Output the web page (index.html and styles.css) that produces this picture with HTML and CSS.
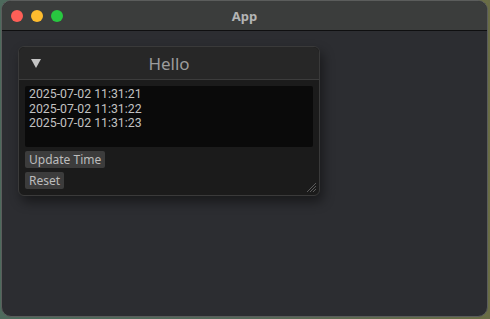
FILE: index.html
```html
<!DOCTYPE html>
<html lang="en">
<head>
    <meta charset="UTF-8">
    <meta name="viewport" content="width=device-width, initial-scale=1.0">
    <title>App</title>
    <link rel="stylesheet" href="styles.css">
</head>
<body>
    <div class="desktop">
        <div class="window">
            <header class="titlebar">
                <div class="lights">
                    <span class="light red"></span>
                    <span class="light yellow"></span>
                    <span class="light green"></span>
                </div>
                <h1>App</h1>
            </header>
            <main class="content">
                <section class="panel">
                    <div class="panel-head">
                        <svg class="collapse" width="10" height="9" viewBox="0 0 10 9">
                            <polygon points="0,0 10,0 5,9" fill="#c4c4c4"/>
                        </svg>
                        <h2>Hello</h2>
                    </div>
                    <div class="panel-body">
                        <div class="log">
                            <div>2025-07-02 11:31:21</div>
                            <div>2025-07-02 11:31:22</div>
                            <div>2025-07-02 11:31:23</div>
                        </div>
                        <button class="btn">Update Time</button>
                        <button class="btn">Reset</button>
                    </div>
                    <!-- resize grip -->
                    <svg class="grip" width="10" height="10" viewBox="0 0 10 10">
                        <line x1="1" y1="10" x2="10" y2="1" stroke="#5a5a5a" stroke-width="1"/>
                        <line x1="4" y1="10" x2="10" y2="4" stroke="#5a5a5a" stroke-width="1"/>
                        <line x1="7" y1="10" x2="10" y2="7" stroke="#5a5a5a" stroke-width="1"/>
                    </svg>
                </section>
            </main>
        </div>
    </div>
</body>
</html>
```

FILE: styles.css
```css
* {
    box-sizing: border-box;
}

body {
    margin: 0;
    padding: 0;
    font-family: 'Noto Sans', sans-serif;
}

.desktop {
    width: 490px;
    height: 319px;
    background: linear-gradient(90deg, #4d6a5c, #55685a 50%, #6a6d45);
    padding: 0 2px 2px 1px;
    display: flex;
}

.window {
    flex: 1;
    display: flex;
    flex-direction: column;
    border: 1px solid #5b5d5c;
    border-radius: 10px;
    overflow: hidden;
    background: #2c2d31;
}

.titlebar {
    height: 30px;
    background: #3b3d3c;
    border-bottom: 1px solid #0f0f10;
    display: flex;
    align-items: center;
    position: relative;
    padding-left: 9px;
}

.lights {
    display: flex;
    gap: 8px;
}

.light {
    width: 12px;
    height: 12px;
    border-radius: 50%;
}

.red { background: #fe5f57; }
.yellow { background: #febc2e; }
.green { background: #28c840; }

.titlebar h1 {
    position: absolute;
    left: 0;
    right: 0;
    margin: 0;
    text-align: center;
    font-size: 13px;
    font-weight: bold;
    color: #b3b4b4;
}

.content {
    flex: 1;
    padding: 15px 0 0 16px;
}

.panel {
    position: relative;
    width: 302px;
    background: #1b1b1b;
    border: 1px solid #3a3a3a;
    border-radius: 6px;
    box-shadow: 3px 6px 12px rgba(0, 0, 0, 0.45);
}

.panel-head {
    height: 33px;
    background: #272727;
    border-bottom: 1px solid #3c3c3c;
    border-radius: 6px 6px 0 0;
    display: flex;
    align-items: center;
    position: relative;
    padding-left: 12px;
}

.collapse {
    position: relative;
    z-index: 1;
}

.panel-head h2 {
    position: absolute;
    left: 0;
    right: 0;
    margin: 0;
    text-align: center;
    font-size: 17px;
    font-weight: normal;
    color: #9c9c9c;
}

.panel-body {
    padding: 6px 6px 6px 6px;
    display: flex;
    flex-direction: column;
    align-items: flex-start;
    gap: 4px;
}

.log {
    width: 288px;
    height: 61px;
    background: #0a0a0a;
    border-radius: 2px;
    padding: 1px 4px;
    font-family: Roboto, sans-serif;
    font-size: 12.3px;
    line-height: 14.5px;
    color: #c2c2c2;
}

.btn {
    height: 17px;
    padding: 0 4px;
    border: none;
    border-radius: 2px;
    background: #3c3c3c;
    color: #bdbdbd;
    font-family: 'Noto Sans', sans-serif;
    font-size: 12px;
    line-height: 17px;
}

.grip {
    position: absolute;
    right: 3px;
    bottom: 3px;
}
```
